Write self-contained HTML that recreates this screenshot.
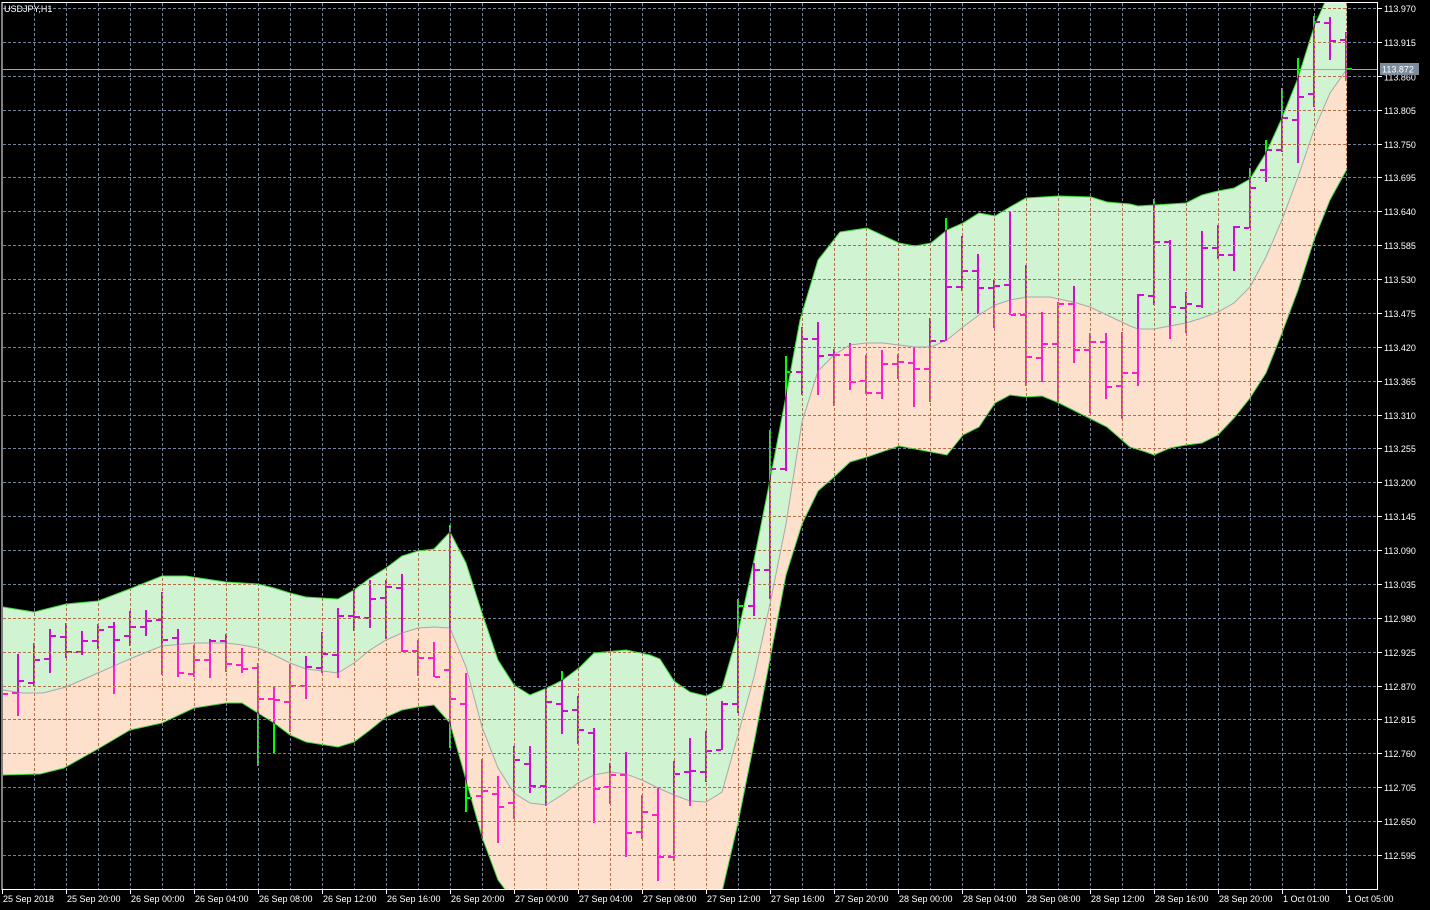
<!DOCTYPE html>
<html><head><meta charset="utf-8">
<style>
html,body{margin:0;padding:0;background:#000;width:1430px;height:910px;overflow:hidden}
svg{display:block}
text{font-family:"Liberation Sans",Arial,sans-serif;font-size:9px;fill:#fff}
</style></head>
<body>
<svg id="s" width="1430" height="910" xmlns="http://www.w3.org/2000/svg">
<defs>
<clipPath id="chart"><rect x="3" y="3" width="1374" height="886"/></clipPath>
</defs>
<rect width="1430" height="910" fill="#000"/>
<g id="grid1" stroke="#73849a" stroke-width="1" stroke-dasharray="3,2" clip-path="url(#chart)"></g>
<g clip-path="url(#chart)">
<path id="fg" fill="#d0f3d2"/>
<path id="fp" fill="#fde1cd"/>
</g>
<g id="grid2" stroke="#b0704a" stroke-width="1" stroke-dasharray="3,2"></g>
<g clip-path="url(#chart)" fill="none">
<polyline id="lu" stroke="#3fd83a" stroke-width="1"/>
<polyline id="lm" stroke="#a8a8a8" stroke-width="1"/>
<polyline id="ll" stroke="#3fd83a" stroke-width="1"/>
<polyline id="ll2" stroke="#3fd83a" stroke-width="1"/>
</g>
<line x1="3" y1="69.5" x2="1377" y2="69.5" stroke="#a0a8b0" stroke-width="1"/>
<g id="bars" fill="#00ff00" style="mix-blend-mode:difference" clip-path="url(#chart)"></g>
<rect x="2" y="2.5" width="1375.5" height="887" fill="none" stroke="#fff" stroke-width="1"/>
<g id="axis"></g>
<text x="4" y="12">USDJPY,H1</text>
<rect x="1380" y="63" width="39" height="12" fill="#7d8c9c"/>
<text x="1382" y="72.5">113.872</text>
</svg>
<script>
var U=[[3,607],[34,612],[50,608],[66,604],[98,601],[132,588],[162,576],[186,576],[226,582],[258,584],[274,588],[290,593],[306,597],[338,599],[354,590],[370,578],[386,568],[402,556],[418,551],[434,549],[450,532],[466,563],[482,613],[498,660],[514,685],[530,695],[547,688],[563,680],[580,667],[594,653],[626,650],[650,655],[660,659],[674,681],[690,692],[706,696],[722,688],[738,633],[754,560],[770,480],[786,396],[800,320],[818,260],[840,232],[867,228],[899,243],[915,246],[931,243],[947,230],[963,223],[979,213],[995,216],[1010,207],[1026,198],[1059,196],[1091,197],[1107,202],[1130,204],[1138,206],[1170,204],[1186,203],[1202,195],[1218,191],[1234,188],[1250,179],[1266,153],[1282,118],[1298,78],[1314,27],[1325,2],[1347,2]];
var M=[[3,690],[23,693],[43,693],[66,687],[98,673],[132,658],[162,646],[194,643],[226,643],[242,645],[258,648],[274,655],[290,663],[306,669],[338,673],[354,663],[370,650],[386,640],[402,633],[418,628],[434,627],[450,628],[466,667],[482,727],[498,768],[514,793],[530,803],[546,805],[562,795],[578,783],[594,775],[610,772],[626,774],[642,780],[658,788],[674,795],[690,801],[706,802],[722,792],[738,735],[754,677],[770,604],[786,524],[802,422],[818,371],[834,355],[850,345],[866,343],[883,343],[915,347],[931,347],[947,340],[963,327],[979,315],[995,305],[1010,300],[1027,297],[1050,297],[1073,302],[1090,307],[1107,315],[1130,326],[1138,329],[1154,329],[1186,323],[1202,318],[1218,312],[1234,303],[1250,287],[1266,257],[1282,220],[1298,177],[1314,130],[1330,93],[1347,69]];
var L1=[[3,775],[40,774],[64,768],[96,750],[130,730],[162,723],[194,708],[226,703],[242,703],[258,713],[274,723],[290,735],[306,742],[338,747],[354,742],[370,730],[386,717],[402,710],[418,707],[434,705],[450,723],[466,780],[482,837],[498,880],[507,892]];
var L2=[[722,892],[738,823],[754,743],[770,659],[786,575],[802,524],[818,491],[834,477],[850,462],[867,457],[899,446],[931,452],[947,455],[963,435],[979,427],[995,403],[1010,395],[1026,397],[1042,396],[1059,403],[1091,419],[1107,427],[1130,447],[1146,452],[1154,455],[1170,448],[1186,445],[1202,443],[1218,435],[1234,418],[1250,398],[1266,373],[1282,333],[1298,290],[1314,240],[1330,200],[1347,169]];
var L=L1.concat(L2);
function pts(a){return a.map(function(p){return p[0]+','+p[1]}).join(' ')}
function rev(a){return a.slice().reverse()}
document.getElementById('fg').setAttribute('d','M'+pts(U)+' L'+pts(rev(M))+'Z');
document.getElementById('fp').setAttribute('d','M'+pts(M)+' L'+pts(rev(L))+'Z');
document.getElementById('lu').setAttribute('points',pts(U));
document.getElementById('lm').setAttribute('points',pts(M));
document.getElementById('ll').setAttribute('points',pts(L1));
document.getElementById('ll2').setAttribute('points',pts(L2));
var NS='http://www.w3.org/2000/svg';
function el(n,a,parent){var e=document.createElementNS(NS,n);for(var k in a)e.setAttribute(k,a[k]);parent.appendChild(e);return e}
var defs=document.querySelector('defs');
var cp=el('clipPath',{id:'fillc'},defs);
el('path',{d:'M'+pts(U)+' L'+pts(rev(L))+'Z'},cp);
var g1=document.getElementById('grid1'),g2=document.getElementById('grid2');
g2.setAttribute('clip-path','url(#fillc)');
for(var x=34;x<1377;x+=32){el('line',{x1:x+.5,y1:3,x2:x+.5,y2:889},g1);el('line',{x1:x+.5,y1:3,x2:x+.5,y2:889},g2);}
var ax=document.getElementById('axis');
var prices=['113.970','113.915','113.860','113.805','113.750','113.695','113.640','113.585','113.530','113.475','113.420','113.365','113.310','113.255','113.200','113.145','113.090','113.035','112.980','112.925','112.870','112.815','112.760','112.705','112.650','112.595'];
for(var i=0;i<26;i++){var y=Math.round(8+33.88*i)+.5;
 el('line',{x1:3,y1:y,x2:1377,y2:y},g1);el('line',{x1:3,y1:y,x2:1377,y2:y},g2);
 el('line',{x1:1378,y1:y,x2:1382,y2:y,stroke:'#fff'},ax);
 var t=el('text',{x:1384,y:y+(i==2?4:3.5)},ax);t.textContent=prices[i];
}
var times=['25 Sep 2018','25 Sep 20:00','26 Sep 00:00','26 Sep 04:00','26 Sep 08:00','26 Sep 12:00','26 Sep 16:00','26 Sep 20:00','27 Sep 00:00','27 Sep 04:00','27 Sep 08:00','27 Sep 12:00','27 Sep 16:00','27 Sep 20:00','28 Sep 00:00','28 Sep 04:00','28 Sep 08:00','28 Sep 12:00','28 Sep 16:00','28 Sep 20:00','1 Oct 01:00','1 Oct 05:00'];
for(var i=0;i<times.length;i++){var x=2+64*i;
 el('line',{x1:x+.5,y1:889,x2:x+.5,y2:894,stroke:'#fff'},ax);
 var t=el('text',{x:x+1,y:902},ax);t.textContent=times[i];}
var B=[[2,688,700,694,694],
[18,654,716,693,681],[34,643,687,683,660],[50,629,673,659,636],[66,623,658,637,652],[82,631,655,652,641],[98,624,649,641,630],[114,622,694,627,640],[130,611,646,636,627],[146,610,636,627,621],[162,592,675,620,640],[178,629,677,638,673],[194,645,677,674,660],[210,639,678,660,641],[226,634,672,641,664],[242,648,673,665,669],[258,663,766,668,699],[274,687,753,699,700],[290,664,732,702,686],
[306,656,699,686,667],[322,632,673,668,654],[338,608,678,655,616],[354,588,631,616,617],[370,580,628,618,599],[386,580,639,598,587],[402,574,652,588,651],[418,640,676,651,658],[434,642,677,658,677],[450,525,748,670,699],[466,673,812,704,798],[482,759,838,796,791],[498,776,843,794,807],[514,746,819,803,760],[530,746,793,764,786],[546,688,806,786,702],[562,671,734,704,711],[578,696,744,710,730],
[594,728,823,733,789],[610,763,804,787,775],[626,752,857,775,833],[642,795,839,832,812],[658,788,881,815,857],[674,761,861,857,774],[690,738,806,772,771],[706,731,782,772,751],[722,701,750,750,704],[738,599,713,704,606],[754,563,616,606,570],[770,430,599,570,469],[786,356,471,469,372],[802,327,395,372,339],[818,322,395,339,356],[834,349,406,355,355],[850,343,390,355,382],
[866,355,394,381,393],[882,350,399,393,364],[898,354,379,364,362],[914,347,407,363,369],[930,318,402,369,341],[946,218,341,341,287],[962,236,291,287,271],[978,254,314,271,288],[994,279,328,288,286],[1010,212,315,285,315],[1026,265,386,315,357],[1042,312,382,358,344],[1058,302,402,344,304],[1074,286,363,304,350],[1090,333,413,350,342],[1106,333,399,342,387],[1122,332,419,386,373],
[1138,294,386,373,295],[1154,199,305,296,242],[1170,240,339,242,307],[1186,292,333,308,304],[1202,231,308,306,248],[1218,225,259,248,255],[1234,226,271,255,227],[1250,168,228,228,188],[1266,140,182,170,150],[1282,88,152,150,118],[1298,58,163,120,97],[1314,16,107,94,22],[1330,17,60,23,41],[1346,32,81,40,69]];
var bg=document.getElementById('bars');
B.forEach(function(b){var x=b[0];
 el('rect',{x:x-1,y:b[1],width:2,height:b[2]-b[1]},bg);
 el('rect',{x:x-6,y:b[3]-1,width:5,height:2},bg);
 el('rect',{x:x+1,y:b[4]-1,width:5,height:2},bg);
});
</script>
</body></html>
